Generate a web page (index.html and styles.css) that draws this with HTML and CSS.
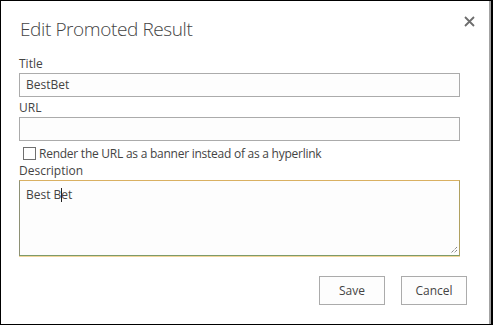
FILE: index.html
```html
<!DOCTYPE html>
<html>
<head>
<meta charset="utf-8">
<link rel="stylesheet" href="styles.css">
</head>
<body>
<div class="dialog">
  <div class="header">
    <h1 class="title">Edit Promoted Result</h1>
    <button class="close" aria-label="Close">
      <svg width="11" height="11" viewBox="0 0 11 11"><path d="M1 1L10 10M10 1L1 10" stroke="#6d6d6d" stroke-width="1.8" fill="none"/></svg>
    </button>
  </div>
  <div class="form">
    <label class="label label-tight">Title</label>
    <div class="input">BestBet</div>
    <label class="label label-tight">URL</label>
    <div class="input"></div>
    <div class="check-row">
      <span class="checkbox"></span>
      <span class="check-text">Render the URL as a banner instead of as a hyperlink</span>
    </div>
    <label class="label">Description</label>
    <div class="textarea">Best B<span class="caret"></span>et
      <svg class="grip" width="8" height="8" viewBox="0 0 8 8"><path d="M7 1L1 7M7 4L4 7" stroke="#555" stroke-width="1" fill="none" stroke-dasharray="1 1"/></svg>
    </div>
  </div>
  <div class="buttons">
    <button class="btn">Save</button>
    <button class="btn">Cancel</button>
  </div>
</div>
</body>
</html>
```
FILE: styles.css
```css
html, body {
  margin: 0;
  padding: 0;
  background: #000;
  width: 493px;
  height: 325px;
  overflow: hidden;
}
body {
  padding: 1px 0 0 1px;
  box-sizing: border-box;
  font-family: "Segoe UI", "Open Sans", "Liberation Sans", sans-serif;
  color: #444;
}
.dialog {
  width: 488px;
  height: 323px;
  background: #fff;
  border-right: 2px solid #a3a3a3;
  box-sizing: content-box;
  display: flex;
  flex-direction: column;
}
.header {
  display: flex;
  justify-content: space-between;
  align-items: flex-start;
  padding: 14px 14px 0 19px;
}
.title {
  margin: 0;
  font-weight: 300;
  font-size: 19px;
  line-height: 28px;
  color: #444;
  letter-spacing: -0.4px;
}
.close {
  border: 0;
  background: none;
  padding: 0;
  margin-top: 1px;
  width: 11px;
  height: 11px;
  display: flex;
}
.form {
  display: flex;
  flex-direction: column;
  padding: 15px 0 0 18px;
  width: 441px;
}
.label {
  font-size: 12px;
  line-height: 15px;
  height: 15px;
  color: #444;
}
.label-tight {
  line-height: 11px;
}
.input {
  height: 22px;
  border: 1px solid #ababab;
  background: #fdfdfd;
  font-size: 12px;
  line-height: 22px;
  padding-left: 6px;
  color: #444;
  margin-bottom: 5px;
}
.check-row {
  display: flex;
  align-items: center;
  gap: 3px;
  padding-left: 4px;
  height: 20px;
  margin-top: -3px;
}
.checkbox {
  width: 11px;
  height: 11px;
  border: 1px solid #6f6f6f;
  background: #fff;
}
.check-text {
  font-size: 12px;
  letter-spacing: -0.25px;
  color: #444;
}
.textarea {
  position: relative;
  margin-top: 2px;
  border: 1px solid;
  border-color: #d9b062 #b0a160 #7d9a6a #8e9175;
  box-shadow: 0 1px 0 #f2d69a;
  background: #fdfdfd;
  font-size: 12px;
  line-height: 16px;
  padding: 6px 6px;
  box-sizing: border-box;
  height: 76px;
  color: #444;
}
.caret {
  display: inline-block;
  width: 1px;
  height: 14px;
  background: #222;
  vertical-align: -3px;
  margin: 0 -1px 0 0;
}
.grip {
  position: absolute;
  right: 1px;
  bottom: 1px;
}
.buttons {
  display: flex;
  justify-content: flex-end;
  gap: 16px;
  padding: 20px 22px 0 0;
}
.btn {
  width: 66px;
  height: 29px;
  border: 1px solid #ababab;
  background: #fdfdfd;
  font-family: "Segoe UI", "Open Sans", "Liberation Sans", sans-serif;
  font-size: 12px;
  color: #444;
  padding: 0;
}
```
